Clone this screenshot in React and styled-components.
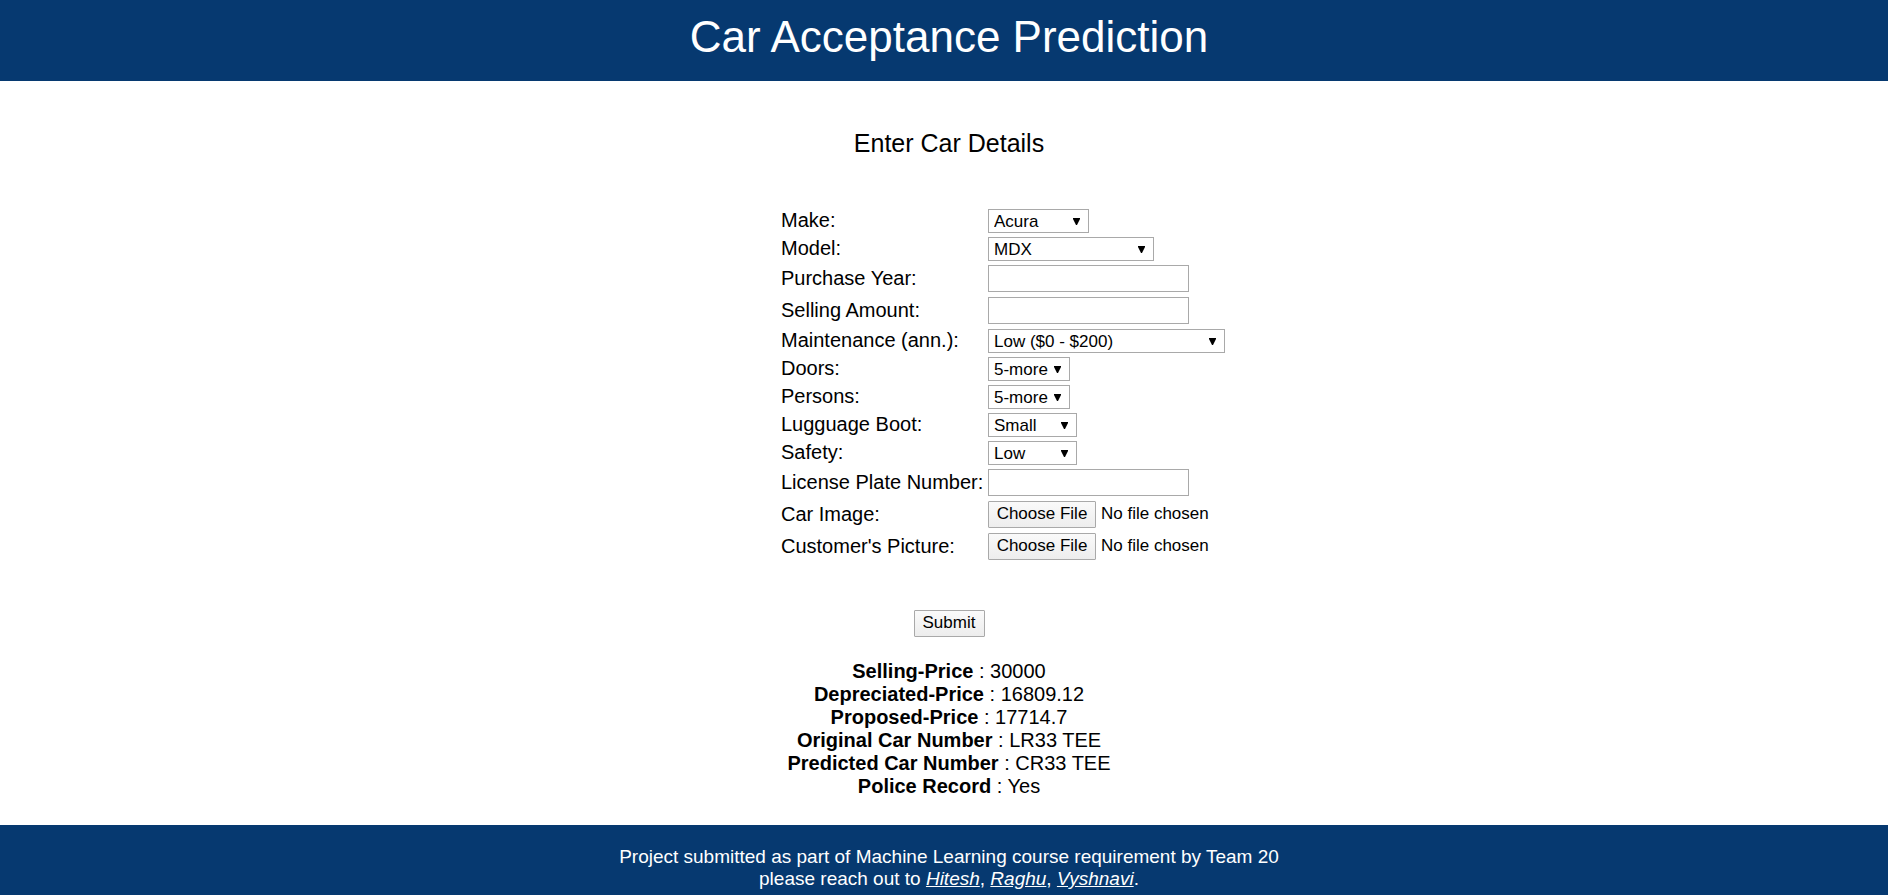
import React from "react";
import styled, { createGlobalStyle } from "styled-components";

const NAVY = "#063970";

const GlobalStyle = createGlobalStyle`
  *, *::before, *::after { box-sizing: border-box; }
  body {
    margin: 0;
    background: #fff;
    color: #000;
    font-family: "Liberation Sans", Arial, sans-serif;
  }
`;

const Page = styled.div`
  min-height: 100vh;
  display: flex;
  flex-direction: column;
`;

const Header = styled.header`
  padding: 12px 0 19px 10px;
  background: ${NAVY};
  color: #fff;
  text-align: center;
`;

const Title = styled.h1`
  margin: 0;
  font-size: 44px;
  line-height: 50px;
  font-weight: 400;
`;

const Main = styled.main`
  flex: 1;
  padding: 48px 0 27px 10px;
`;

const Heading = styled.h2`
  margin: 0 0 51px;
  font-size: 25px;
  line-height: 29px;
  font-weight: 400;
  text-align: center;
`;

const Form = styled.form`
  display: flex;
  flex-direction: column;
`;

const Fields = styled.div`
  margin-left: calc(50% - 168px);
  display: flex;
  flex-direction: column;
`;

const Row = styled.div`
  display: flex;
  align-items: center;
  margin-bottom: ${(p) => (p.$compact ? 4 : 5)}px;
`;

const Label = styled.label`
  flex: 0 0 207px;
  padding-bottom: 2px;
  font-size: 20px;
  line-height: 22px;
  white-space: nowrap;
`;

const SelectBox = styled.div`
  position: relative;
  width: ${(p) => p.$width}px;
`;

const Select = styled.select`
  display: block;
  width: 100%;
  height: 24px;
  padding: 2px 5px 0;
  border: 1px solid #a9a9a9;
  border-radius: 0;
  background: #fff;
  color: #000;
  appearance: none;
  font-family: inherit;
  font-size: 17px;
  line-height: 20px;
`;

const Arrow = styled.svg`
  position: absolute;
  top: 9px;
  right: 9px;
  width: 7px;
  height: 7px;
  pointer-events: none;
`;

const TextInput = styled.input`
  width: 201px;
  height: 27px;
  padding: 1px 2px;
  border: 1px solid #a9a9a9;
  border-radius: 0;
  font-family: inherit;
  font-size: 17px;
`;

const buttonFace = `
  height: 27px;
  padding: 0 0 2px;
  border: 1px solid #a9a9a9;
  border-radius: 1px;
  background: linear-gradient(#fafafa, #ededed);
  color: #000;
  font-family: inherit;
  font-size: 17px;
  line-height: 20px;
`;

const FileInput = styled.input`
  height: 27px;
  font-family: inherit;
  font-size: 17px;
  line-height: 24px;

  &::file-selector-button {
    ${buttonFace}
    width: 108px;
    margin: 0 5px 0 0;
  }
`;

const SubmitButton = styled.button`
  ${buttonFace}
  align-self: center;
  width: 71px;
  margin: 45px 0 23px;
`;

const Results = styled.div`
  font-size: 20px;
  line-height: 23px;
  text-align: center;
`;

const Footer = styled.footer`
  padding: 21px 0 5px 10px;
  background: ${NAVY};
  color: #fff;
  font-size: 19px;
  line-height: 22px;
  text-align: center;
`;

const ContactLink = styled.a`
  color: inherit;
  font-style: italic;
`;

const fields = [
  { id: "make", label: "Make:", kind: "select", width: 101, options: ["Acura"] },
  { id: "model", label: "Model:", kind: "select", width: 166, options: ["MDX"] },
  { id: "year", label: "Purchase Year:", kind: "text" },
  { id: "amount", label: "Selling Amount:", kind: "text" },
  { id: "maintenance", label: "Maintenance (ann.):", kind: "select", width: 237, options: ["Low ($0 - $200)"] },
  { id: "doors", label: "Doors:", kind: "select", width: 82, options: ["5-more"] },
  { id: "persons", label: "Persons:", kind: "select", width: 82, options: ["5-more"] },
  { id: "boot", label: "Lugguage Boot:", kind: "select", width: 89, options: ["Small"] },
  { id: "safety", label: "Safety:", kind: "select", width: 89, options: ["Low"] },
  { id: "plate", label: "License Plate Number:", kind: "text" },
  { id: "car-image", label: "Car Image:", kind: "file" },
  { id: "customer-picture", label: "Customer's Picture:", kind: "file" },
];

const results = [
  ["Selling-Price", "30000"],
  ["Depreciated-Price", "16809.12"],
  ["Proposed-Price", "17714.7"],
  ["Original Car Number", "LR33 TEE"],
  ["Predicted Car Number", "CR33 TEE"],
  ["Police Record", "Yes"],
];

function Control({ field }) {
  if (field.kind === "select") {
    return (
      <SelectBox $width={field.width}>
        <Select id={field.id} name={field.id}>
          {field.options.map((option) => (
            <option key={option}>{option}</option>
          ))}
        </Select>
        <Arrow viewBox="0 0 7 7" aria-hidden="true">
          <path d="M0 0H7V1L4 7H3L0 1Z" fill="#000" />
        </Arrow>
      </SelectBox>
    );
  }
  if (field.kind === "file") {
    return <FileInput id={field.id} name={field.id} type="file" />;
  }
  return <TextInput id={field.id} name={field.id} type="text" />;
}

export default function App() {
  return (
    <Page>
      <GlobalStyle />
      <Header>
        <Title>Car Acceptance Prediction</Title>
      </Header>
      <Main>
        <Heading>Enter Car Details</Heading>
        <Form onSubmit={(event) => event.preventDefault()}>
          <Fields>
            {fields.map((field) => (
              <Row key={field.id} $compact={field.kind === "select"}>
                <Label htmlFor={field.id}>{field.label}</Label>
                <Control field={field} />
              </Row>
            ))}
          </Fields>
          <SubmitButton type="submit">Submit</SubmitButton>
        </Form>
        <Results>
          {results.map(([name, value]) => (
            <div key={name}>
              <b>{name}</b> : {value}
            </div>
          ))}
        </Results>
      </Main>
      <Footer>
        Project submitted as part of Machine Learning course requirement by Team 20
        <br />
        please reach out to <ContactLink href="#hitesh">Hitesh</ContactLink>,{" "}
        <ContactLink href="#raghu">Raghu</ContactLink>,{" "}
        <ContactLink href="#vyshnavi">Vyshnavi</ContactLink>.
      </Footer>
    </Page>
  );
}
